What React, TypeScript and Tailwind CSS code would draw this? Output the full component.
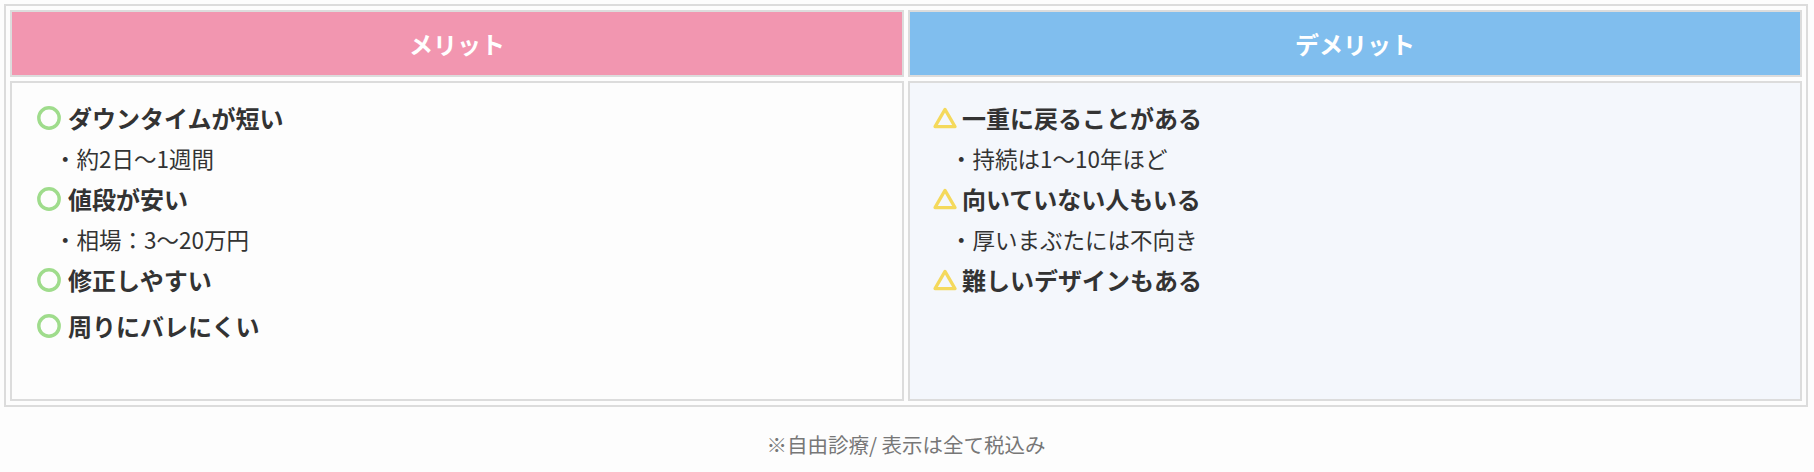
import React from 'react';

const merits = [
  { title: 'ダウンタイムが短い', note: '約2日〜1週間' },
  { title: '値段が安い', note: '相場：3〜20万円' },
  { title: '修正しやすい' },
  { title: '周りにバレにくい' },
];

const demerits = [
  { title: '一重に戻ることがある', note: '持続は1〜10年ほど' },
  { title: '向いていない人もいる', note: '厚いまぶたには不向き' },
  { title: '難しいデザインもある' },
];

function CircleMark() {
  return (
    <svg width="24" height="24" viewBox="0 0 24 24" className="shrink-0 mr-[7px]">
      <circle cx="12" cy="12" r="10.2" fill="none" stroke="#9fdc8c" strokeWidth="3.4" />
    </svg>
  );
}

function TriangleMark() {
  return (
    <svg width="24" height="24" viewBox="0 0 24 24" className="shrink-0 mr-[5px]">
      <path d="M12 3.4 L22 20.6 H2 Z" fill="none" stroke="#f4d95c" strokeWidth="3.2" strokeLinejoin="round" />
    </svg>
  );
}

function Item({ title, note, mark }: { title: string; note?: string; mark: 'circle' | 'triangle' }) {
  return (
    <>
      <li className="flex items-center h-[46px] font-bold text-[24px]">
        {mark === 'circle' ? <CircleMark /> : <TriangleMark />}
        <span>{title}</span>
      </li>
      {note && (
        <li className="flex items-center h-[35px] pl-[17px] font-normal text-[22.5px]">
          <span>・{note}</span>
        </li>
      )}
    </>
  );
}

export default function App() {
  return (
    <div className="min-h-screen bg-[#fdfdfd] pt-[4px] pl-[4px] pr-[6px] font-['Noto_Sans_CJK_JP','Noto_Sans',sans-serif] text-[#333]">
      <div className="border-2 border-[#dcdcdc] p-[4px]">
        <div className="grid grid-cols-2 gap-[4px]">
          <div className="h-[67px] border-2 border-[#dcdcdc] bg-[#f296b0] flex items-center justify-center text-white font-bold text-[24px]">
            メリット
          </div>
          <div className="h-[67px] border-2 border-[#dcdcdc] bg-[#80beee] flex items-center justify-center text-white font-bold text-[24px]">
            デメリット
          </div>

          <div className="h-[320px] border-2 border-[#dcdcdc] bg-[#fdfdfd] pt-[12px] pl-[25px]">
            <ul>
              {merits.map((m) => (
                <Item key={m.title} title={m.title} note={m.note} mark="circle" />
              ))}
            </ul>
          </div>
          <div className="h-[320px] border-2 border-[#dcdcdc] bg-[#f4f7fc] pt-[12px] pl-[23px]">
            <ul>
              {demerits.map((d) => (
                <Item key={d.title} title={d.title} note={d.note} mark="triangle" />
              ))}
            </ul>
          </div>
        </div>
      </div>

      <p className="mt-[22px] text-center text-[20.5px] text-[#777]">※自由診療/ 表示は全て税込み</p>
    </div>
  );
}
